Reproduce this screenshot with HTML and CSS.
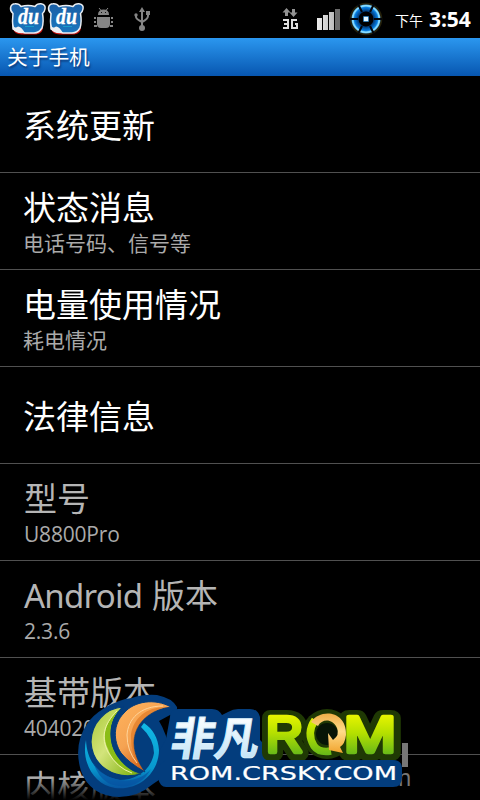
FILE: index.html
```html
<!DOCTYPE html>
<html lang="zh-CN">
<head>
<meta charset="utf-8">
<title>关于手机</title>
<link rel="stylesheet" href="styles.css">
</head>
<body>
<main class="phone">
  <header class="status">
    <svg class="status-icons" width="160" height="38" viewBox="0 0 160 38">
      <defs>
        <linearGradient id="bear" x1="0" y1="0" x2="0" y2="1"><stop stop-color="#1b5fa5"/><stop offset="1" stop-color="#1976be"/></linearGradient>
        <g id="du">
          <path d="M13 28Q14 35 23 34.500H36Q43 34 43 27" fill="#c80f0b"/>
          <path d="M13 13.500C9 10 10 4 15 3.800Q19 3.500 21 6.500Q28 4.500 35 6.500Q37 3.500 41 3.800Q46 4.500 45 9Q44.500 12 42.500 13.500Q44 22 42 28Q39 33 34 33H25L13 29Q12 21 13 13.500Z" fill="url(#bear)" stroke="#e8edf2" stroke-width="1.500" stroke-linejoin="round"/>
          <path d="M13 24Q14 29 17 27Q20 25 25 33Q15 34 13 29Z" fill="#edf0f3"/>
          <path d="M25 26.500h9" stroke="#189dca"/>
          <text x="18" y="23.500" textLength="21" lengthAdjust="spacingAndGlyphs" class="du">du</text>
        </g>
      </defs>
      <use href="#du"/><use href="#du" x="38"/>
      <g fill="#858585">
        <path d="M98 15Q98 9.500 103.500 9.500Q109 9.500 109 15Z"/>
        <path d="M97 17h13v7q0 4-4 4h-5q-4 0-4-4Z"/>
        <path d="M99 8l2.500 3M108 8l-2.500 3" stroke="#858585"/>
        <path d="M94 18h2M94 22h2M94 26h3M111 18h2M111 22h2M110 26h3" stroke="#858585" stroke-width="2"/>
        <path d="M101 12.500h1M105 12.500h1" stroke="#111"/>
      </g>
      <g fill="none" stroke="#858585" stroke-width="2">
        <path d="M142 28V9M136 15v2q0 2 6 5M148 14v2q0 3-6 6"/>
        <path d="M142 7l-3 5h6ZM146 11h4v4h-4Z" fill="#858585" stroke="none"/>
        <circle cx="136" cy="15" r="1.700" fill="#858585" stroke="none"/>
        <circle cx="142" cy="28" r="3" fill="#858585" stroke="none"/>
      </g>
    </svg>
    <svg class="status-icons" width="114" height="38" viewBox="276 0 114 38">
      <defs>
        <radialGradient id="glow" gradientUnits="userSpaceOnUse" cx="366" cy="19" r="16"><stop offset=".4" stop-color="#02234f"/><stop offset=".72" stop-color="#057be0"/><stop offset=".84" stop-color="#87dfff"/><stop offset="1" stop-color="#0767bd"/></radialGradient>
        <linearGradient id="bars"><stop stop-color="#eee"/><stop offset="1" stop-color="#bbb"/></linearGradient>
      </defs>
      <path d="M286.500 8l4 4.500h-2.500v3.500h-3v-3.500h-2.500ZM292 9h3v3.500h2.500l-4 4.500-4-4.500h2.500Z" fill="#929292"/>
      <path d="M283 20h5v8h-5M284 24h4M297 20h-5v8h5v-4h-2" fill="none" stroke="#ddd" stroke-width="2"/>
      <path d="M317 18h5v12h-5ZM323 15h5v15h-5ZM329 12h5v18h-5Z" fill="url(#bars)"/>
      <path d="M335 9h5v21h-5Z" fill="#6c6c6c"/>
      <circle cx="366" cy="19" r="15.300" fill="none" stroke="#25200a" stroke-width="2"/>
      <circle cx="366" cy="19" r="11" fill="none" stroke="url(#glow)" stroke-width="7"/>
      <circle cx="366" cy="19" r="13.300" fill="none" stroke="#8adcff"/>
      <path d="M350 19h8M374 19h8M362 12l-4-8M370 12l4-8M362 26l-4 8M370 26l4 8" stroke="#02050b" stroke-width="2"/>
      <path d="M363.500 16.500h5v5h-5Z" fill="#e6f8ff" stroke="#0878d0" stroke-width=".6"/>
    </svg>
    <span class="ampm">下午</span><span class="clock">3:54</span>
  </header>
  <h1 class="heading">关于手机</h1>
  <ul class="list">
    <li class="row"><div class="title">系统更新</div></li>
    <li class="row"><div class="title">状态消息</div><div class="sub">电话号码、信号等</div></li>
    <li class="row"><div class="title">电量使用情况</div><div class="sub">耗电情况</div></li>
    <li class="row"><div class="title">法律信息</div></li>
    <li class="row dim"><div class="title">型号</div><div class="sub latin">U8800Pro</div></li>
    <li class="row dim"><div class="title"><span class="android">Android</span>版本</div><div class="sub latin">2.3.6</div></li>
    <li class="row dim"><div class="title">基带版本</div><div class="sub latin">404020</div></li>
    <li class="row dim last"><div class="title">内核版本</div></li>
  </ul>
  <div class="fade"></div>
  <svg class="brand" width="350" height="115" viewBox="70 685 350 115">
    <defs>
      <linearGradient id="lime" x1="0" y1="0" x2="1" y2="1"><stop stop-color="#a8c934"/><stop offset=".45" stop-color="#d3e47b"/><stop offset="1" stop-color="#77ac05"/></linearGradient>
      <linearGradient id="orange" x1="0" y1="0" x2=".7" y2="1"><stop stop-color="#ffb35d"/><stop offset=".5" stop-color="#f5a352"/><stop offset="1" stop-color="#c54a05"/></linearGradient>
      <linearGradient id="cyan" x1="0" y1="0" x2="0" y2="1"><stop stop-color="#12b9e5"/><stop offset=".7" stop-color="#0798ce"/><stop offset="1" stop-color="#0754a0"/></linearGradient>
      <linearGradient id="ice" x1="0" y1="0" x2="0" y2="1"><stop offset=".2" stop-color="#fff"/><stop offset="1" stop-color="#b5dff6"/></linearGradient>
      <linearGradient id="green" gradientUnits="userSpaceOnUse" x1="0" y1="714" x2="0" y2="756"><stop stop-color="#eaf500"/><stop offset=".45" stop-color="#b5e000"/><stop offset="1" stop-color="#62b51a"/></linearGradient>
      <linearGradient id="gold" x1="0" y1="0" x2="0" y2="1"><stop stop-color="#efae48"/><stop offset=".45" stop-color="#ffdc8a"/><stop offset="1" stop-color="#f1a32e"/></linearGradient>
    </defs>
    <path d="M103 709Q119 699 132 698Q143 694 157 695Q172 698 177 707Q178 713 170 715L159 721Q166 732 171 754V766Q165 777 153 784Q138 797 119 797Q90 796 81 771Q73 745 87 724Q93 715 103 709Z" fill="#033d7d"/>
    <path d="M170 717Q170 708 180 709H212Q219 709 222 715L228 712Q233 709 238 709H250Q258 709 260 717V740L266 746V765H160V750L166 739Z" fill="#033d7d"/>
    <path d="M86 740C81 762 94 785 115 788C142 791 159 770 159 750C158 738 153 729 144 723L141 727Q154 739 154 753C151 771 135 780 120 780C101 777 87 764 86 740Z" fill="url(#cyan)"/>
    <path d="M93 762C105 783 136 787 151 769C142 786 124 790 108 783Q98 777 93 762Z" fill="#0650a0" opacity=".65"/>
    <path d="M123 707C106 708 91 723 91 742C92 765 113 781 141 774C127 771 113 756 111 740C109 724 115 714 123 707Z" fill="url(#lime)" stroke="#033d7d" stroke-width="1.200"/>
    <path d="M120 709C106 720 101 735 108 749C113 763 124 771 141 774C127 771 113 756 111 740C109 724 115 714 120 709Z" fill="#8bbd16"/>
    <path d="M117 711C103 725 101 738 108 752Q117 768 132 773" fill="none" stroke="#edf3a5"/>
    <path d="M124 705C112 716 108 730 112 745Q117 762 138 772Q120 758 118 741Q114 724 124 705Z" fill="#033d7d"/>
    <path d="M171 707C155 698 134 701 124 713C113 724 113 741 121 753Q129 763 145 772C134 757 131 742 137 729C142 718 154 709 171 707Z" fill="url(#orange)" stroke="#033d7d" stroke-width="1"/>
    <path d="M169 707C146 706 134 718 131 734Q130 757 144 771C134 757 131 742 137 729C142 718 154 709 169 707Z" fill="#d96d17" opacity=".55"/>
    <path d="M163 706C140 706 128 719 127 735Q127 751 137 763" fill="none" stroke="#ffd49a"/>
    <g transform="translate(169 755) skewX(-9)"><text x="0" y="0" textLength="88" lengthAdjust="spacingAndGlyphs" class="cn">非凡</text></g>
    <g class="romback"><text x="266" y="753" textLength="37" lengthAdjust="spacingAndGlyphs">R</text><text x="344" y="753" textLength="52" lengthAdjust="spacingAndGlyphs">M</text></g>
    <circle cx="327" cy="734" r="25" fill="#1f3904"/>
    <circle cx="327" cy="734" r="11" fill="#071506"/>
    <g class="rom"><text x="266" y="752" textLength="37" lengthAdjust="spacingAndGlyphs">R</text><text x="344" y="752" textLength="52" lengthAdjust="spacingAndGlyphs">M</text></g>
    <path d="M315 720Q306 733 314 746Q319 753 331 751" fill="none" stroke="url(#green)" stroke-width="7.500"/>
    <path d="M311 722C321 708 347 711 346 735Q345 744 340 747L343 753L329 750L328 733L333 740Q340 735 337 728C332 718 322 719 318 726Z" fill="url(#gold)"/>
    <path d="M402 743h6v24h-6Z" fill="#777"/>
    <text x="390" y="786" class="ghost">m</text>
    <path d="M166 760H393Q402 760 402 769V777Q402 787 393 787H166Q160 787 158 778V766Z" fill="#033d7d"/>
    <text x="170" y="780" textLength="227" lengthAdjust="spacingAndGlyphs" class="url">ROM.CRSKY.COM</text>
  </svg>
</main>
</body>
</html>
```
FILE: styles.css
```css
* { box-sizing: border-box; }
body { margin: 0; background: #000; font-family: "Noto Sans", "Noto Sans CJK SC", sans-serif; }
.phone { position: relative; width: 480px; height: 800px; overflow: hidden; background: #000; color: #fff; }
.status { height: 38px; display: flex; align-items: center; }
.status-icons { flex: none; }
.status-icons + .status-icons { margin-left: 116px; }
.du { font: italic bold 23px "Liberation Serif", serif; fill: #fff; stroke: #fff; stroke-width: .3px; }
.ampm { width: 38px; padding: 3px 0 0 5px; font-size: 14px; line-height: 20px; white-space: nowrap; }
.clock { padding-left: 1px; font: bold 21px/24px "Open Sans", sans-serif; letter-spacing: -.1px; }
.heading { margin: 0; height: 38px; padding-left: 7px; font-size: 20.7px; line-height: 38px; font-weight: 400; background: linear-gradient(#2b97ef, #0756b0); text-shadow: 1px 2px 2px #0b3978; }
.list { margin: 0; padding: 0; list-style: none; }
.row { height: 97px; padding: 3px 0 0 23px; display: flex; flex-direction: column; justify-content: center; border-bottom: 1px solid #505050; white-space: nowrap; }
.title { font-size: 33px; line-height: 42px; }
.sub { font-size: 21px; line-height: 29px; color: #aaa; }
.dim { padding-left: 24px; color: #b5b5b5; }
.last { height: 46px; padding-top: 15px; justify-content: flex-start; border: 0; }
.last .title { line-height: 33px; }
.latin { font-family: "Open Sans", sans-serif; letter-spacing: -.2px; }
.android { display: inline-block; width: 128px; letter-spacing: -.75px; }
.fade { position: absolute; inset: 776px 0 0; background: linear-gradient(transparent, #000); }
.brand { position: absolute; left: 70px; top: 685px; }
.ghost { font-size: 23px; fill: #777; }
.cn { font: 700 45px "Noto Sans CJK SC", sans-serif; fill: url(#ice); stroke: #d9effb; stroke-width: 1px; }
.rom, .romback { font: 400 50px "Liberation Sans", sans-serif; stroke-linejoin: round; }
.rom { fill: url(#green); stroke: url(#green); stroke-width: 4.5px; }
.romback { fill: #1f3904; stroke: #1f3904; stroke-width: 16px; }
.url { font: 19px "DejaVu Sans", sans-serif; fill: #fff; stroke: #fff; stroke-width: .2px; }
```
